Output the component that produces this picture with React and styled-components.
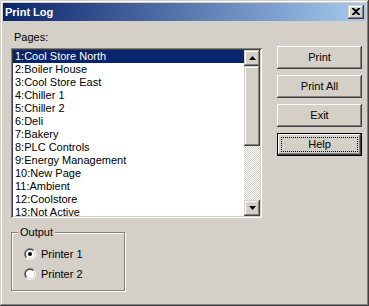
import React from "react";
import styled, { createGlobalStyle, css } from "styled-components";

const GlobalStyle = createGlobalStyle`
  html, body {
    margin: 0;
    padding: 0;
    background: #d4d0c8;
  }
  * {
    box-sizing: border-box;
  }
`;

const raised = css`
  box-shadow: inset -1px -1px 0 #404040, inset 1px 1px 0 #ffffff,
    inset -2px -2px 0 #808080, inset 2px 2px 0 #d4d0c8;
`;

const raisedArrow = css`
  box-shadow: inset -1px -1px 0 #404040, inset 1px 1px 0 #d4d0c8,
    inset -2px -2px 0 #808080, inset 2px 2px 0 #ffffff;
`;

const Window = styled.div`
  width: 369px;
  height: 306px;
  padding: 3px;
  display: flex;
  flex-direction: column;
  background: #d4d0c8;
  box-shadow: inset -1px -1px 0 #404040, inset 1px 1px 0 #d4d0c8,
    inset -2px -2px 0 #808080, inset 2px 2px 0 #ffffff;
  font-family: "Liberation Sans", Arial, sans-serif;
  font-size: 11px;
  color: #000;
`;

const TitleBar = styled.div`
  height: 18px;
  display: flex;
  align-items: center;
  justify-content: space-between;
  padding: 0 2px 0 2px;
  background: linear-gradient(to right, #0a246a, #a6caf0);
`;

const Title = styled.span`
  color: #fff;
  font-weight: bold;
  font-size: 11px;
  line-height: 18px;
`;

const CloseButton = styled.div`
  width: 16px;
  height: 14px;
  display: flex;
  align-items: center;
  justify-content: center;
  background: #d4d0c8;
  ${raisedArrow};
  padding-bottom: 1px;
`;

const Body = styled.div`
  flex: 1;
  display: flex;
  padding: 10px 0 0 8px;
  gap: 15px;
`;

const LeftColumn = styled.div`
  width: 251px;
  display: flex;
  flex-direction: column;
`;

const Label = styled.div`
  line-height: 13px;
  padding-left: 3px;
  margin-bottom: 4px;
`;

const ListBox = styled.div`
  height: 170px;
  display: flex;
  padding: 2px;
  background: #fff;
  box-shadow: inset 1px 1px 0 #808080, inset -1px -1px 0 #ffffff,
    inset 2px 2px 0 #404040, inset -2px -2px 0 #d4d0c8;
`;

const Items = styled.div`
  flex: 1;
  overflow: hidden;
`;

const Item = styled.div`
  height: 13px;
  line-height: 13px;
  padding-left: 2px;
  white-space: nowrap;
  background: ${(p) => (p.$selected ? "#0a246a" : "transparent")};
  color: ${(p) => (p.$selected ? "#fff" : "#000")};
`;

const ScrollBar = styled.div`
  width: 16px;
  display: flex;
  flex-direction: column;
`;

const ArrowButton = styled.div`
  width: 16px;
  height: 16px;
  display: flex;
  align-items: center;
  justify-content: center;
  background: #d4d0c8;
  ${raisedArrow};
`;

const Track = styled.div`
  flex: 1;
  display: flex;
  flex-direction: column;
  background-color: #d4d0c8;
  background-image: repeating-conic-gradient(
    #ffffff 0 25%,
    #d4d0c8 0 50%
  );
  background-size: 2px 2px;
`;

const Thumb = styled.div`
  height: ${(p) => p.$size}px;
  background: #d4d0c8;
  ${raisedArrow};
`;

const GroupBox = styled.fieldset`
  margin: 8px 0 0 0;
  width: 114px;
  padding: 5px 6px 6px 6px;
  border: 1px solid #808080;
  box-shadow: 1px 1px 0 #ffffff, inset 1px 1px 0 #ffffff;
`;

const Legend = styled.legend`
  padding: 0 2px;
  line-height: 13px;
  background: #d4d0c8;
`;

const RadioRow = styled.label`
  height: 20px;
  display: flex;
  align-items: center;
  gap: 5px;
  padding-left: 6px;
`;

const RightColumn = styled.div`
  width: 85px;
  margin-top: 15px;
  display: flex;
  flex-direction: column;
  gap: 6px;
`;

const Button = styled.div`
  height: 23px;
  display: flex;
  align-items: center;
  justify-content: center;
  background: #d4d0c8;
  ${raised};
  ${(p) =>
    p.$default &&
    css`
      border: 1px solid #000;
      padding: 3px;
    `}
`;

const Caption = styled.span`
  line-height: 13px;
  ${(p) =>
    p.$focused &&
    css`
      align-self: stretch;
      flex: 1;
      display: flex;
      align-items: center;
      justify-content: center;
      border: 1px dotted #000;
    `}
`;

const CloseGlyph = () => (
  <svg width="8" height="7" viewBox="0 0 8 7">
    <path
      d="M0 0h2l2 2 2-2h2v1L5 3.5 8 6v1H6L4 5 2 7H0V6l3-2.5L0 1z"
      fill="#000"
    />
  </svg>
);

const Arrow = ({ down }) => (
  <svg width="7" height="4" viewBox="0 0 7 4">
    <polygon
      points={down ? "0,0 7,0 3.5,4" : "3.5,0 7,4 0,4"}
      fill="#000"
    />
  </svg>
);

const Radio = ({ checked }) => (
  <svg width="12" height="12" viewBox="0 0 12 12">
    <defs>
      <linearGradient id="radioOuter" x1="0" y1="0" x2="1" y2="1">
        <stop offset="0.5" stopColor="#808080" />
        <stop offset="0.5" stopColor="#ffffff" />
      </linearGradient>
      <linearGradient id="radioInner" x1="0" y1="0" x2="1" y2="1">
        <stop offset="0.5" stopColor="#404040" />
        <stop offset="0.5" stopColor="#d4d0c8" />
      </linearGradient>
    </defs>
    <circle cx="6" cy="6" r="6" fill="url(#radioOuter)" />
    <circle cx="6" cy="6" r="5" fill="url(#radioInner)" />
    <circle cx="6" cy="6" r="4" fill="#ffffff" />
    {checked && <circle cx="6" cy="6" r="2" fill="#000" />}
  </svg>
);

const pages = [
  "1:Cool Store North",
  "2:Boiler House",
  "3:Cool Store East",
  "4:Chiller 1",
  "5:Chiller 2",
  "6:Deli",
  "7:Bakery",
  "8:PLC Controls",
  "9:Energy Management",
  "10:New Page",
  "11:Ambient",
  "12:Coolstore",
  "13:Not Active",
];

export default function App() {
  return (
    <>
      <GlobalStyle />
      <Window>
        <TitleBar>
          <Title>Print Log</Title>
          <CloseButton>
            <CloseGlyph />
          </CloseButton>
        </TitleBar>
        <Body>
          <LeftColumn>
            <Label>Pages:</Label>
            <ListBox>
              <Items>
                {pages.map((p, i) => (
                  <Item key={p} $selected={i === 0}>
                    {p}
                  </Item>
                ))}
              </Items>
              <ScrollBar>
                <ArrowButton>
                  <Arrow />
                </ArrowButton>
                <Track>
                  <Thumb $size={80} />
                </Track>
                <ArrowButton>
                  <Arrow down />
                </ArrowButton>
              </ScrollBar>
            </ListBox>
            <GroupBox>
              <Legend>Output</Legend>
              <RadioRow>
                <Radio checked />
                Printer 1
              </RadioRow>
              <RadioRow>
                <Radio />
                Printer 2
              </RadioRow>
            </GroupBox>
          </LeftColumn>
          <RightColumn>
            <Button>
              <Caption>Print</Caption>
            </Button>
            <Button>
              <Caption>Print All</Caption>
            </Button>
            <Button>
              <Caption>Exit</Caption>
            </Button>
            <Button $default>
              <Caption $focused>Help</Caption>
            </Button>
          </RightColumn>
        </Body>
      </Window>
    </>
  );
}
